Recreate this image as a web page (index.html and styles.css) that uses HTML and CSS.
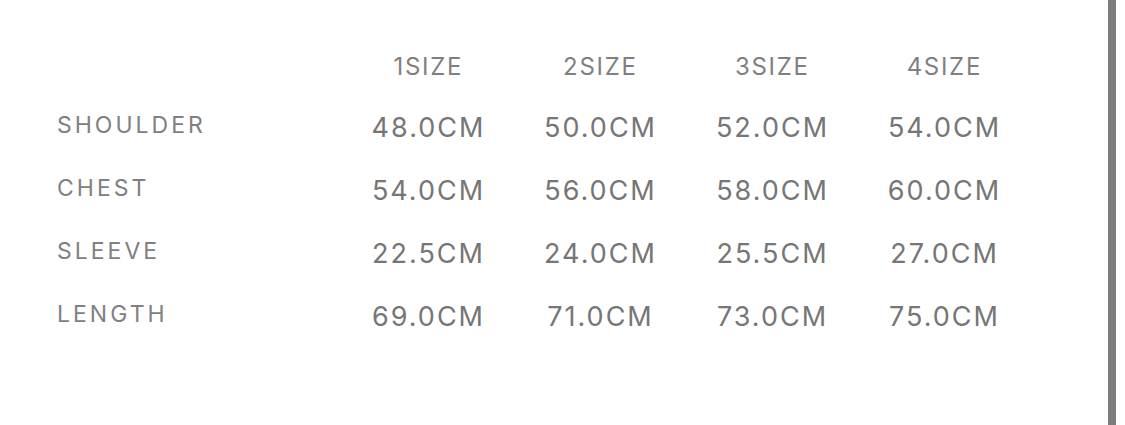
FILE: index.html
```html
<!DOCTYPE html>
<html>
<head>
<meta charset="utf-8">
<link rel="stylesheet" href="styles.css">
</head>
<body>
<div class="page">
  <div class="content">
    <div class="size-table">
      <div class="cell corner"></div>
      <div class="cell head">1SIZE</div>
      <div class="cell head">2SIZE</div>
      <div class="cell head">3SIZE</div>
      <div class="cell head">4SIZE</div>

      <div class="cell label">SHOULDER</div>
      <div class="cell value">48.0CM</div>
      <div class="cell value">50.0CM</div>
      <div class="cell value">52.0CM</div>
      <div class="cell value">54.0CM</div>

      <div class="cell label">CHEST</div>
      <div class="cell value">54.0CM</div>
      <div class="cell value">56.0CM</div>
      <div class="cell value">58.0CM</div>
      <div class="cell value">60.0CM</div>

      <div class="cell label">SLEEVE</div>
      <div class="cell value">22.5CM</div>
      <div class="cell value">24.0CM</div>
      <div class="cell value">25.5CM</div>
      <div class="cell value">27.0CM</div>

      <div class="cell label">LENGTH</div>
      <div class="cell value">69.0CM</div>
      <div class="cell value">71.0CM</div>
      <div class="cell value">73.0CM</div>
      <div class="cell value">75.0CM</div>
    </div>
  </div>
  <div class="scrollbar"></div>
  <div class="edge"></div>
</div>
</body>
</html>
```
FILE: styles.css
```css
html, body {
  margin: 0;
  padding: 0;
  background: #ffffff;
}

.page {
  display: flex;
  width: 1125px;
  height: 425px;
  overflow: hidden;
}

.content {
  flex: 1;
  padding-top: 39px;
  padding-left: 57px;
}

.size-table {
  display: grid;
  grid-template-columns: 284.5px repeat(4, 172px);
  grid-template-rows: 56px repeat(4, 63px);
  font-family: "Inter", "Noto Sans", sans-serif;
}

.cell {
  display: flex;
  align-items: center;
  line-height: 1;
  white-space: nowrap;
}

.head {
  justify-content: center;
  font-size: 24px;
  letter-spacing: 1.7px;
  color: #7f7f7f;
  padding-left: 1.7px;
}

.label {
  font-size: 23px;
  letter-spacing: 3px;
  color: #808080;
  padding-bottom: 2px;
}

.value {
  justify-content: center;
  font-size: 27px;
  letter-spacing: 2px;
  color: #767676;
  padding-left: 2px;
  padding-top: 2px;
}

.scrollbar {
  width: 8px;
  background: #7b7b7b;
  flex: none;
}

.edge {
  width: 9px;
  flex: none;
  background: #ffffff;
}
```
